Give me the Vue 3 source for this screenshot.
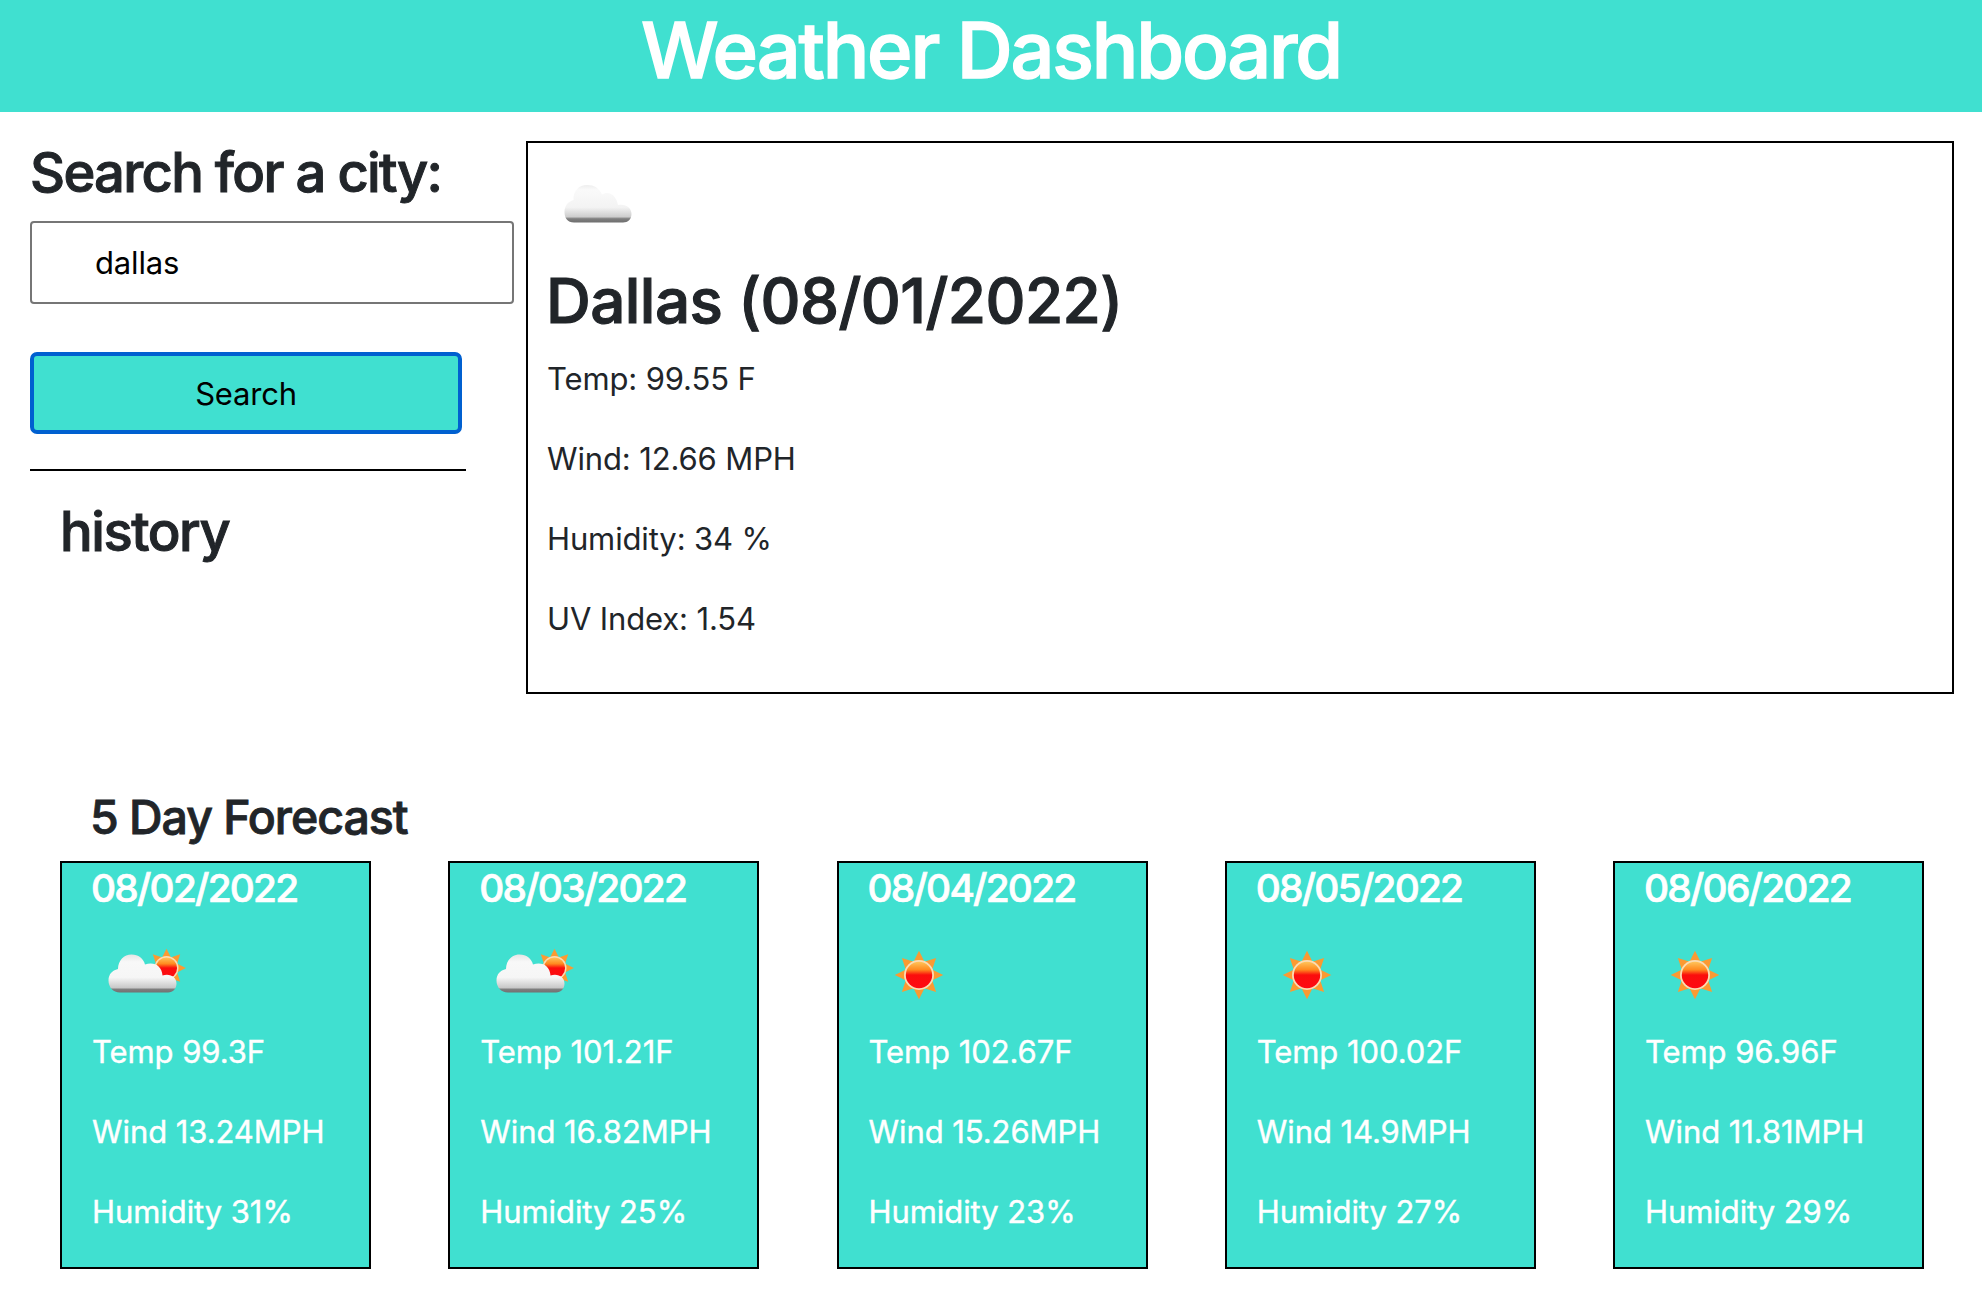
<script setup>
import { ref } from 'vue'

const current = ['Temp: 99.55 F', 'Wind: 12.66 MPH', 'Humidity: 34 %', 'UV Index: 1.54']
const days = [
  { date: '08/02/2022', icon: 'partly', temp: '99.3F', wind: '13.24MPH', humidity: '31%' },
  { date: '08/03/2022', icon: 'partly', temp: '101.21F', wind: '16.82MPH', humidity: '25%' },
  { date: '08/04/2022', icon: 'sun', temp: '102.67F', wind: '15.26MPH', humidity: '23%' },
  { date: '08/05/2022', icon: 'sun', temp: '100.02F', wind: '14.9MPH', humidity: '27%' },
  { date: '08/06/2022', icon: 'sun', temp: '96.96F', wind: '11.81MPH', humidity: '29%' },
]
const rays = [0, 45, 90, 135, 180, 225, 270, 315]
const city = ref('dallas')
</script>

<template>
  <div class="page">
    <svg class="defs" width="0" height="0">
      <defs>
        <linearGradient id="sunFill" x1="0" y1="0" x2="0" y2="1">
          <stop offset="0" stop-color="#ffc45a" />
          <stop offset="0.3" stop-color="#ff8a20" />
          <stop offset="0.5" stop-color="#fb0d0d" />
          <stop offset="1" stop-color="#fd0a12" />
        </linearGradient>
        <linearGradient id="cloudFill" gradientUnits="userSpaceOnUse" x1="0" y1="29" x2="0" y2="68">
          <stop offset="0" stop-color="#e4e4e4" />
          <stop offset="0.2" stop-color="#f8f8f8" />
          <stop offset="0.6" stop-color="#f6f6f6" />
          <stop offset="0.86" stop-color="#c9c9c9" />
          <stop offset="0.91" stop-color="#7d7d7d" />
          <stop offset="1" stop-color="#707070" />
        </linearGradient>
        <linearGradient id="cloudSoft" gradientUnits="userSpaceOnUse" x1="0" y1="29" x2="0" y2="68">
          <stop offset="0" stop-color="#ebebeb" />
          <stop offset="0.15" stop-color="#fafafa" />
          <stop offset="0.6" stop-color="#f3f3f3" />
          <stop offset="0.84" stop-color="#cdcdcd" />
          <stop offset="0.89" stop-color="#808080" />
          <stop offset="1" stop-color="#6c6c6c" />
        </linearGradient>
        <g id="sun">
          <path v-for="r in rays" :key="r" d="M-5.600 -13 L0 -24.200 L5.600 -13 Z" fill="#fb9a32" :transform="`rotate(${r})`" />
          <circle r="15" fill="#fbdcb4" />
          <circle r="13.2" fill="url(#sunFill)" />
        </g>
      </defs>
    </svg>

    <header class="banner"><h1>Weather Dashboard</h1></header>

    <main class="top">
      <aside class="side">
        <h2 class="side-title">Search for a city:</h2>
        <input v-model="city" class="field" type="text" />
        <button class="search" type="button">Search</button>
        <div class="rule"></div>
        <h2 class="history">history</h2>
      </aside>
      <section class="panel">
        <svg class="icon" viewBox="0 0 100 100">
          <path d="M27 67.500C20.500 67.500 17.500 63 17.500 57C17.500 51 21 46.500 26.500 45C26 36 32 30 40 30C47 30 52 33 55 39.500C61 35.500 69 39 71 50C78 48.500 84.500 52 84.500 59C84.500 64 81 67.500 76 67.500Z" fill="url(#cloudSoft)" />
        </svg>
        <h2 class="city">Dallas (08/01/2022)</h2>
        <p v-for="line in current" :key="line">{{ line }}</p>
      </section>
    </main>

    <section class="forecast">
      <h3>5 Day Forecast</h3>
      <div class="cards">
        <article v-for="day in days" :key="day.date" class="card">
          <h4>{{ day.date }}</h4>
          <svg class="icon" viewBox="0 0 100 100">
            <use v-if="day.icon === 'sun'" href="#sun" x="49" y="50" />
            <template v-else>
              <use href="#sun" transform="translate(73.500 43) scale(0.800)" />
              <path d="M27 67.500C20 67.500 15.500 62 15.500 55.500C15.500 49.500 19 45.500 25 44C25 35.500 31 29.500 38.500 29.500C45.500 29.500 50.500 33.500 52 39.500C61 36 69 41 69.500 50.500C77.500 48 83.500 52.500 83.500 58.500C83.500 63.500 80 67.500 75 67.500Z" fill="url(#cloudFill)" />
            </template>
          </svg>
          <p>Temp {{ day.temp }}</p>
          <p>Wind {{ day.wind }}</p>
          <p>Humidity {{ day.humidity }}</p>
        </article>
      </div>
    </section>
  </div>
</template>

<style>
body { margin: 0; background: #fff; }
</style>

<style scoped>
.page { height: 1314px; overflow: hidden; color: #212529; font-family: Inter, "Liberation Sans", sans-serif; font-size: 31px; line-height: 48px; }
.page * { box-sizing: border-box; }
.defs { display: block; }
h1, h2, h3, h4, p { margin: 0; font-weight: 500; white-space: nowrap; }
h1, h2, h3, h4 { -webkit-text-stroke: 0.018em currentColor; }
p { font-weight: 400; letter-spacing: -0.13px; }
.banner { height: 112px; padding-top: 2px; background: #40e0d0; text-align: center; color: #fff; }
.banner h1 { font-size: 77.5px; line-height: 96px; letter-spacing: -2.2px; }
.top { display: flex; justify-content: space-between; padding: 29px 28px 0 30px; }
.side { width: 484px; }
.side-title { font-size: 54.3px; line-height: 63px; margin-bottom: 17px; letter-spacing: -1.7px; }
.field { display: block; width: 484px; height: 83px; padding: 0 63px; border: 2px solid #767676; border-radius: 4px; outline: 0; background: #fff; color: #000; font: inherit; letter-spacing: -0.15px; }
.search { display: block; width: 432px; height: 82px; margin-top: 48px; padding: 1px 0 0; border: 4px solid #0060d0; border-radius: 7px; background: #40e0d0; color: #000; font: inherit; letter-spacing: -0.2px; text-align: center; }
.rule { width: 436px; height: 2px; margin: 35px 0 27px; background: #000; }
.history { padding-left: 30px; font-size: 54.3px; line-height: 66px; letter-spacing: -1.45px; }
.panel { width: 1428px; height: 553px; padding: 12px 19px; border: 2px solid #000; }
.icon { display: block; width: 100px; height: 100px; }
.city { margin: 7px 0 16px -1px; font-size: 62px; line-height: 77px; letter-spacing: -0.57px; }
.panel p, .card p { margin-bottom: 32px; }
.forecast { padding: 94px 58px 0 60px; }
.forecast h3 { padding-left: 30px; font-size: 46.5px; line-height: 58px; letter-spacing: -1.06px; }
.cards { display: flex; justify-content: space-between; margin-top: 15px; }
.card { width: 311px; height: 408px; padding: 1px 0 0 30px; border: 2px solid #000; background: #40e0d0; color: #fff; }
.card h4 { margin-left: -1px; font-size: 38.8px; line-height: 48px; letter-spacing: -1.74px; }
.card p { -webkit-text-stroke: 0.4px currentColor; letter-spacing: -0.07px; }
.card .icon { margin: 13px 0 0 1px; }
.card p:first-of-type { margin-top: 3px; }
</style>
